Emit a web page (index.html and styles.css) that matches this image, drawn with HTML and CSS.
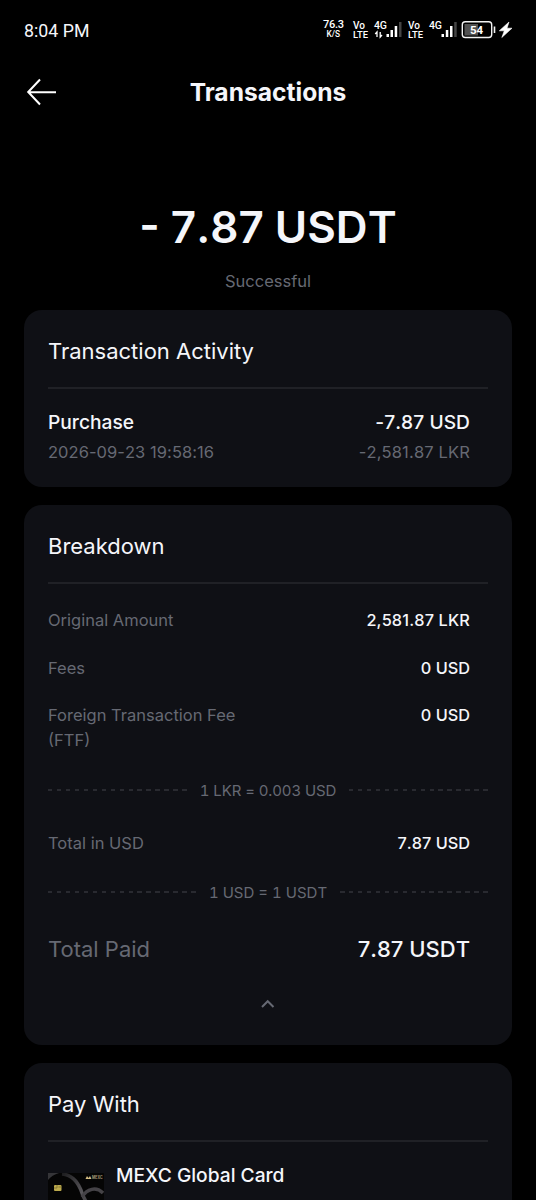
FILE: index.html
```html
<!DOCTYPE html>
<html lang="en">
<head>
<meta charset="utf-8">
<title>Transactions</title>
<link rel="stylesheet" href="styles.css">
</head>
<body>
<div class="screen">
  <div class="status">
    <span class="clock">8:04 PM</span>
    <svg class="indicators" width="216" height="44" viewBox="0 0 216 44">
      <g class="ind-text">
        <text x="13" y="19.800" font-size="11" textLength="21">76.3</text>
        <text x="16.500" y="28.600" font-size="8.200" textLength="13.500" lengthAdjust="spacingAndGlyphs">K/S</text>
        <text x="43" y="20.700" font-size="10" textLength="12">Vo</text>
        <text x="43" y="30" font-size="9.600" textLength="15" lengthAdjust="spacingAndGlyphs">LTE</text>
        <text x="64" y="21" font-size="10.500" textLength="13">4G</text>
        <text x="98" y="20.700" font-size="10" textLength="12">Vo</text>
        <text x="98" y="30" font-size="9.600" textLength="15" lengthAdjust="spacingAndGlyphs">LTE</text>
        <text x="119" y="21" font-size="10.500" textLength="13">4G</text>
      </g>
      <path d="M67 29V24L65.200 26M70.200 24V29L72 27" fill="none" stroke="#fff" stroke-width="1.300"/>
      <path d="M76.500 26h2.500v3h-2.500zM80.500 22h2.500v7h-2.500zM84.700 18h2.500v11h-2.500zM131.500 26h2.500v3h-2.500zM135.800 22h2.500v7h-2.500zM140 18h2.500v11h-2.500z" fill="#fff"/>
      <path d="M89 14h2.500v15h-2.500zM144.200 14h2.500v15h-2.500z" fill="#444"/>
      <rect x="154.500" y="16" width="13.500" height="11.500" fill="#505050"/>
      <rect x="152.300" y="13.700" width="29.400" height="15.800" rx="3" fill="none" stroke="#f2f2f2" stroke-width="1.400"/>
      <path d="M184.500 18.500v6.500" stroke="#f2f2f2" stroke-width="1.600"/>
      <text class="level" x="160" y="25.700" font-size="11.500" textLength="13.200">54</text>
      <path d="M199 14L189.300 22.800H194.300L191.800 29.500L202 20.200H197Z" fill="#fff" stroke="#fff" stroke-width=".6"/>
    </svg>
  </div>
  <header class="topbar">
    <svg class="back" width="32" height="28" viewBox="0 0 32 28" fill="none" stroke="#fff" stroke-width="2"><path d="M14 1.500L2.200 14L14 26.500M2.200 14.200H30"/></svg>
    <h1 class="title">Transactions</h1>
  </header>
  <div class="hero">
    <div class="amount">- 7.87 USDT</div>
    <div class="state">Successful</div>
  </div>
  <section class="card activity">
    <h2 class="heading">Transaction Activity</h2>
    <div class="line purchase"><span>Purchase</span><span class="num">-7.87 USD</span></div>
    <div class="line meta"><span class="num">2026-09-23 19:58:16</span><span class="num local">-2,581.87 LKR</span></div>
  </section>
  <section class="card breakdown">
    <h2 class="heading">Breakdown</h2>
    <div class="item"><span class="label">Original Amount</span><span class="value local">2,581.87 LKR</span></div>
    <div class="item"><span class="label">Fees</span><span class="value">0 USD</span></div>
    <div class="item"><span class="label">Foreign Transaction Fee<br>(FTF)</span><span class="value">0 USD</span></div>
    <div class="rate rate-local"><i class="dash"></i><span>1 LKR = 0.003 USD</span><i class="dash"></i></div>
    <div class="item total-usd"><span class="label">Total in USD</span><span class="value">7.87 USD</span></div>
    <div class="rate"><i class="dash"></i><span>1 USD = 1 USDT</span><i class="dash"></i></div>
    <div class="paid"><span class="paid-label">Total Paid</span><span class="paid-value">7.87 USDT</span></div>
    <svg class="chevron" width="14" height="10" viewBox="0 0 14 10" fill="none" stroke="#666973" stroke-width="2"><path d="M1 8L6.700 2.200L12.500 8"/></svg>
  </section>
  <section class="card pay">
    <h2 class="heading">Pay With</h2>
    <div class="method">
      <svg class="thumb" width="56" height="36" viewBox="0 0 56 36">
        <defs><linearGradient id="band" x1="0" y1="0" x2="1" y2="1"><stop offset="0" stop-color="#1d1d1f"/><stop offset=".6" stop-color="#58565a"/><stop offset="1" stop-color="#29292b"/></linearGradient></defs>
        <rect width="56" height="36" rx="1" fill="#050505"/>
        <path d="M0 0H11Q4 2 0 7Z" fill="#353538"/>
        <path d="M14 1C25 2 31 11 34 20S40 31 44 36" fill="none" stroke="url(#band)" stroke-width="3.500"/>
        <path d="M34 24C39 16 48 13 55 20" fill="none" stroke="#444246" stroke-width="3.500"/>
        <rect x="6" y="12" width="7.500" height="6" rx="1" fill="#bcaa4c"/><path d="M6 15h3M10.500 14h3M9 12v3" stroke="#71662e" stroke-width=".7"/>
        <path d="M37.500 6L39 3L40.500 5L42 3L43.500 6Z" fill="#d4bd83"/>
        <text class="brand" x="44" y="6.200" font-size="4.500" textLength="10.500" lengthAdjust="spacingAndGlyphs">MEXC</text>
      </svg>
      <span class="method-name">MEXC Global Card</span>
    </div>
  </section>
</div>
</body>
</html>
```
FILE: styles.css
```css
* { box-sizing: border-box; }
body { margin: 0; background: #000; font-family: Inter, "Noto Sans", sans-serif; color: #f5f6fa; }
h1, h2 { margin: 0; }
.screen { width: 536px; height: 1200px; overflow: hidden; background: #000; }
.status { height: 60px; padding: 8px 10px 0 24px; display: flex; justify-content: space-between; }
.clock { font: 400 17.800px/45px Roboto, sans-serif; }
.ind-text { font-family: Roboto, sans-serif; font-weight: 500; fill: #fff; }
.level { font-family: Roboto, sans-serif; font-weight: 700; fill: #fff; }
.topbar { height: 64px; padding: 0 26px; display: grid; grid-template-columns: 32px 1fr 32px; align-items: center; }
.title { font-size: 24.600px; font-weight: 700; line-height: 33px; text-align: center; }
.hero { height: 186px; padding-top: 76px; text-align: center; }
.amount { font-size: 44px; font-weight: 600; line-height: 54px; font-kerning: none; }
.state { margin-top: 15px; font-size: 16.500px; line-height: 24px; color: #666973; }
.card { width: 488px; margin: 0 auto 18px; padding: 0 24px; background: #0f1015; border-radius: 18px; }
.activity { height: 177px; }
.breakdown { height: 540px; }
.pay { height: 200px; }
.heading { height: 79px; padding-top: 25px; border-bottom: 2px solid #202126; font-size: 22px; font-weight: 400; line-height: 32px; }
.line { display: flex; justify-content: space-between; padding-right: 18px; }
.num { font-kerning: none; letter-spacing: 0.050px; }
.purchase { padding-top: 19px; font-size: 19.200px; font-weight: 500; line-height: 28px; }
.meta { padding-top: 4px; font-size: 16.500px; line-height: 24px; color: #666973; }
.item { display: flex; justify-content: space-between; padding-right: 18px; margin-top: 23px; font-size: 16.500px; line-height: 24.700px; }
.heading + .item { margin-top: 24px; }
.label { color: #666973; }
.value { font-size: 16.300px; font-weight: 500; font-kerning: none; }
.local { letter-spacing: 0.150px; }
.rate { display: flex; align-items: center; gap: 13px; height: 24px; margin-top: 27px; font-size: 15px; line-height: 24px; color: #666973; font-kerning: none; font-variant-numeric: tabular-nums; }
.rate span { margin-top: -1px; }
.rate-local { letter-spacing: -0.120px; }
.dash { flex: 1; height: 2px; margin-top: -3px; background: repeating-linear-gradient(90deg, #292a30 0 4.500px, transparent 4.500px 8.950px); }
.total-usd { margin-top: 27px; }
.total-usd + .rate { margin-top: 26px; }
.paid { display: flex; justify-content: space-between; padding-right: 18px; margin-top: 27px; font-size: 22px; line-height: 32px; }
.paid-label { color: #666973; }
.paid-value { font-weight: 500; font-kerning: none; }
.chevron { display: block; margin: 34px auto 0; }
.method { display: flex; align-items: flex-start; gap: 12px; padding-top: 19px; }
.thumb { margin-top: 12px; }
.method-name { font-size: 19.200px; font-weight: 500; line-height: 28px; }
.brand { font-family: Inter, sans-serif; font-weight: 700; fill: #a89a76; }
```
